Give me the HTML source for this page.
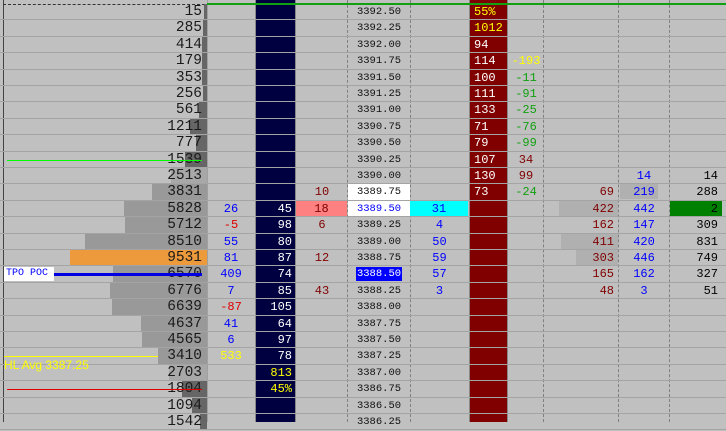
<!DOCTYPE html>
<html><head><meta charset="utf-8"><style>
*{margin:0;padding:0;box-sizing:border-box}
body{width:726px;height:422px;overflow:hidden;background:#c0c0c0;position:relative;font-family:"Liberation Mono",monospace}
.a{position:absolute}
.r{position:absolute;left:0;width:726px;height:16.4px;border-bottom:1px solid #a4a4a4}
.r span{position:absolute;top:0;height:15.4px;line-height:16px;font-size:12px;white-space:pre}
.v{left:100px;width:102px;text-align:right;font-size:14.5px!important;color:#1a1a1a;line-height:17px!important}
.d{left:207px;width:48px;text-align:center;color:#0000ff}
.n{left:256px;width:36px;text-align:right;color:#fff}
.c4{left:297px;width:50px;text-align:center;color:#800000}
.p{left:348px;width:62px;text-align:center;font-size:10.5px!important;color:#111}
.cy{left:411px;width:57px;text-align:center;color:#0000ff}
.m{left:474px;width:34px;color:#fff}
.g{left:509px;width:34px;text-align:center;color:#10a010}
.c7{left:544px;width:70px;text-align:right;color:#800000}
.c8{left:619px;width:50px;text-align:center;color:#0000ff}
.c9{left:670px;width:48px;text-align:right;color:#000}
.bar{top:0;height:15.4px;right:519px;background:#999}
.dk{background:#666}
</style></head><body>
<div class="a" style="left:3px;top:0;width:1px;height:422px;background:#444"></div>
<div class="a" style="left:207px;top:0;width:1px;height:422px;background:#a0a0a0"></div>
<div class="a" style="left:255px;top:0;width:41px;height:422px;background:#000040;border-left:1px solid #888;border-right:1px solid #888"></div>
<div class="a" style="left:347px;top:0;height:422px;border-left:1px dashed #808080"></div>
<div class="a" style="left:410px;top:0;height:422px;border-left:1px dashed #808080"></div>
<div class="a" style="left:469px;top:0;width:39px;height:422px;background:#800000;border-left:1px solid #888;border-right:1px solid #888"></div>
<div class="a" style="left:543px;top:0;height:422px;border-left:1px dashed #808080"></div>
<div class="a" style="left:618px;top:0;height:422px;border-left:1px dashed #808080"></div>
<div class="a" style="left:669px;top:0;height:422px;border-left:1px dashed #808080"></div>
<div class="a" style="left:3px;top:4px;width:202px;border-top:1px dashed #333"></div>

<div class="r" style="top:4px"><div class="a bar dk" style="left:204px;right:519px"></div><span class="v">15</span><span class="p">3392.50</span><span class="m" style="color:#ff0">55%</span></div>
<div class="r" style="top:20.4px"><div class="a bar dk" style="left:203px"></div><span class="v">285</span><span class="p">3392.25</span><span class="m" style="color:#ff0">1012</span></div>
<div class="r" style="top:36.8px"><div class="a bar dk" style="left:202px"></div><span class="v">414</span><span class="p">3392.00</span><span class="m">94</span></div>
<div class="r" style="top:53.2px"><div class="a bar dk" style="left:202px"></div><span class="v">179</span><span class="p">3391.75</span><span class="m">114</span><span class="g" style="color:#ff0">-193</span></div>
<div class="r" style="top:69.6px"><div class="a bar dk" style="left:202px"></div><span class="v">353</span><span class="p">3391.50</span><span class="m">100</span><span class="g">-11</span></div>
<div class="r" style="top:86px"><div class="a bar dk" style="left:203px"></div><span class="v">256</span><span class="p">3391.25</span><span class="m">111</span><span class="g">-91</span></div>
<div class="r" style="top:102.4px"><div class="a bar dk" style="left:199px"></div><span class="v">561</span><span class="p">3391.00</span><span class="m">133</span><span class="g">-25</span></div>
<div class="r" style="top:118.8px"><div class="a bar dk" style="left:190px"></div><span class="v">1211</span><span class="p">3390.75</span><span class="m">71</span><span class="g">-76</span></div>
<div class="r" style="top:135.2px"><div class="a bar dk" style="left:196px"></div><span class="v">777</span><span class="p">3390.50</span><span class="m">79</span><span class="g">-99</span></div>
<div class="r" style="top:151.6px"><div class="a bar dk" style="left:185px"></div><span class="v">1539</span><span class="p">3390.25</span><span class="m">107</span><span class="g" style="color:#800000">34</span></div>
<div class="r" style="top:168px"><div class="a bar" style="left:171px;background:#a8a8a8"></div><span class="v">2513</span><span class="p">3390.00</span><span class="m">130</span><span class="g" style="color:#800000">99</span><span class="c8">14</span><span class="c9">14</span></div>
<div class="r" style="top:184.4px"><div class="a bar" style="left:152px"></div><span class="v">3831</span><span class="c4">10</span><span class="p" style="background:#fff">3389.75</span><span class="m">73</span><span class="g">-24</span><div class="a" style="left:620px;top:0;width:38px;height:15px;background:#b0b0b0"></div><span class="c7">69</span><span class="c8">219</span><span class="c9">288</span></div>
<div class="r" style="top:200.8px"><div class="a bar" style="left:124px"></div><span class="v">5828</span><span class="d">26</span><span class="n">45</span><span class="c4" style="background:#ff8080;left:296px;width:51px">18</span><span class="p" style="background:#fff;color:#00f">3389.50</span><span class="cy" style="background:#0ff;left:410px;width:58px">31</span><div class="a" style="left:559px;top:0;width:59px;height:15px;background:#b0b0b0"></div><span class="c7">422</span><span class="c8">442</span><span class="c9" style="background:#008000;left:670px;width:52px;padding-right:4px">2</span></div>
<div class="r" style="top:217.2px"><div class="a bar" style="left:125px"></div><span class="v">5712</span><span class="d" style="color:#e00000">-5</span><span class="n">98</span><span class="c4">6</span><span class="p">3389.25</span><span class="cy">4</span><span class="c7">162</span><span class="c8">147</span><span class="c9">309</span></div>
<div class="r" style="top:233.6px"><div class="a bar" style="left:85px"></div><span class="v">8510</span><span class="d">55</span><span class="n">80</span><span class="p">3389.00</span><span class="cy">50</span><div class="a" style="left:561px;top:0;width:57px;height:15px;background:#b0b0b0"></div><span class="c7">411</span><span class="c8">420</span><span class="c9">831</span></div>
<div class="r" style="top:250px"><div class="a bar" style="left:70px;background:#ec9a3c"></div><span class="v">9531</span><span class="d">81</span><span class="n">87</span><span class="c4">12</span><span class="p">3388.75</span><span class="cy">59</span><div class="a" style="left:576px;top:0;width:42px;height:15px;background:#b0b0b0"></div><span class="c7">303</span><span class="c8">446</span><span class="c9">749</span></div>
<div class="r" style="top:266.4px"><div class="a bar" style="left:113px"></div><span class="v">6570</span><span class="d">409</span><span class="n">74</span><span class="p"><b style="font-weight:normal;background:#00f;color:#fff;padding:1px 1px">3388.50</b></span><span class="cy">57</span><span class="c7">165</span><span class="c8">162</span><span class="c9">327</span></div>
<div class="r" style="top:282.8px"><div class="a bar" style="left:110px"></div><span class="v">6776</span><span class="d">7</span><span class="n">85</span><span class="c4">43</span><span class="p">3388.25</span><span class="cy">3</span><span class="c7">48</span><span class="c8">3</span><span class="c9">51</span></div>
<div class="r" style="top:299.2px"><div class="a bar" style="left:112px"></div><span class="v">6639</span><span class="d" style="color:#e00000">-87</span><span class="n">105</span><span class="p">3388.00</span></div>
<div class="r" style="top:315.6px"><div class="a bar" style="left:141px"></div><span class="v">4637</span><span class="d">41</span><span class="n">64</span><span class="p">3387.75</span></div>
<div class="r" style="top:332px"><div class="a bar" style="left:142px"></div><span class="v">4565</span><span class="d">6</span><span class="n">97</span><span class="p">3387.50</span></div>
<div class="r" style="top:348.4px"><div class="a bar" style="left:158px"></div><span class="v">3410</span><span class="d" style="color:#ff0">533</span><span class="n">78</span><span class="p">3387.25</span></div>
<div class="r" style="top:364.8px"><div class="a bar" style="left:169px;background:#a8a8a8"></div><span class="v">2703</span><span class="n" style="color:#ff0">813</span><span class="p">3387.00</span></div>
<div class="r" style="top:381.2px"><div class="a bar dk" style="left:182px"></div><span class="v">1804</span><span class="n" style="color:#ff0">45%</span><span class="p">3386.75</span></div>
<div class="r" style="top:397.6px"><div class="a bar dk" style="left:192px"></div><span class="v">1094</span><span class="p">3386.50</span></div>
<div class="r" style="top:414px"><div class="a bar dk" style="left:200px"></div><span class="v">1542</span><span class="p">3386.25</span></div>

<div class="a" style="left:207px;top:3px;width:519px;height:2px;background:#10a010"></div>
<div class="a" style="left:7px;top:160px;width:195px;height:1px;background:#00ff00"></div>
<div class="a" style="left:7px;top:389px;width:195px;height:1px;background:#e00000"></div>
<div class="a" style="left:4px;top:356px;width:154px;height:1px;background:#ff0"></div>
<div class="a" style="left:4px;top:358px;font-family:'Liberation Sans',sans-serif;font-size:12px;color:#ff0">HL Avg  3387.25</div>
<div class="a" style="left:4px;top:267px;width:50px;height:14px;background:#fff;color:#00f;font-size:10px;line-height:14px;padding-left:2px">TPO POC</div>
<div class="a" style="left:54px;top:273px;width:148px;height:3px;background:#0000e0"></div>
</body></html>
